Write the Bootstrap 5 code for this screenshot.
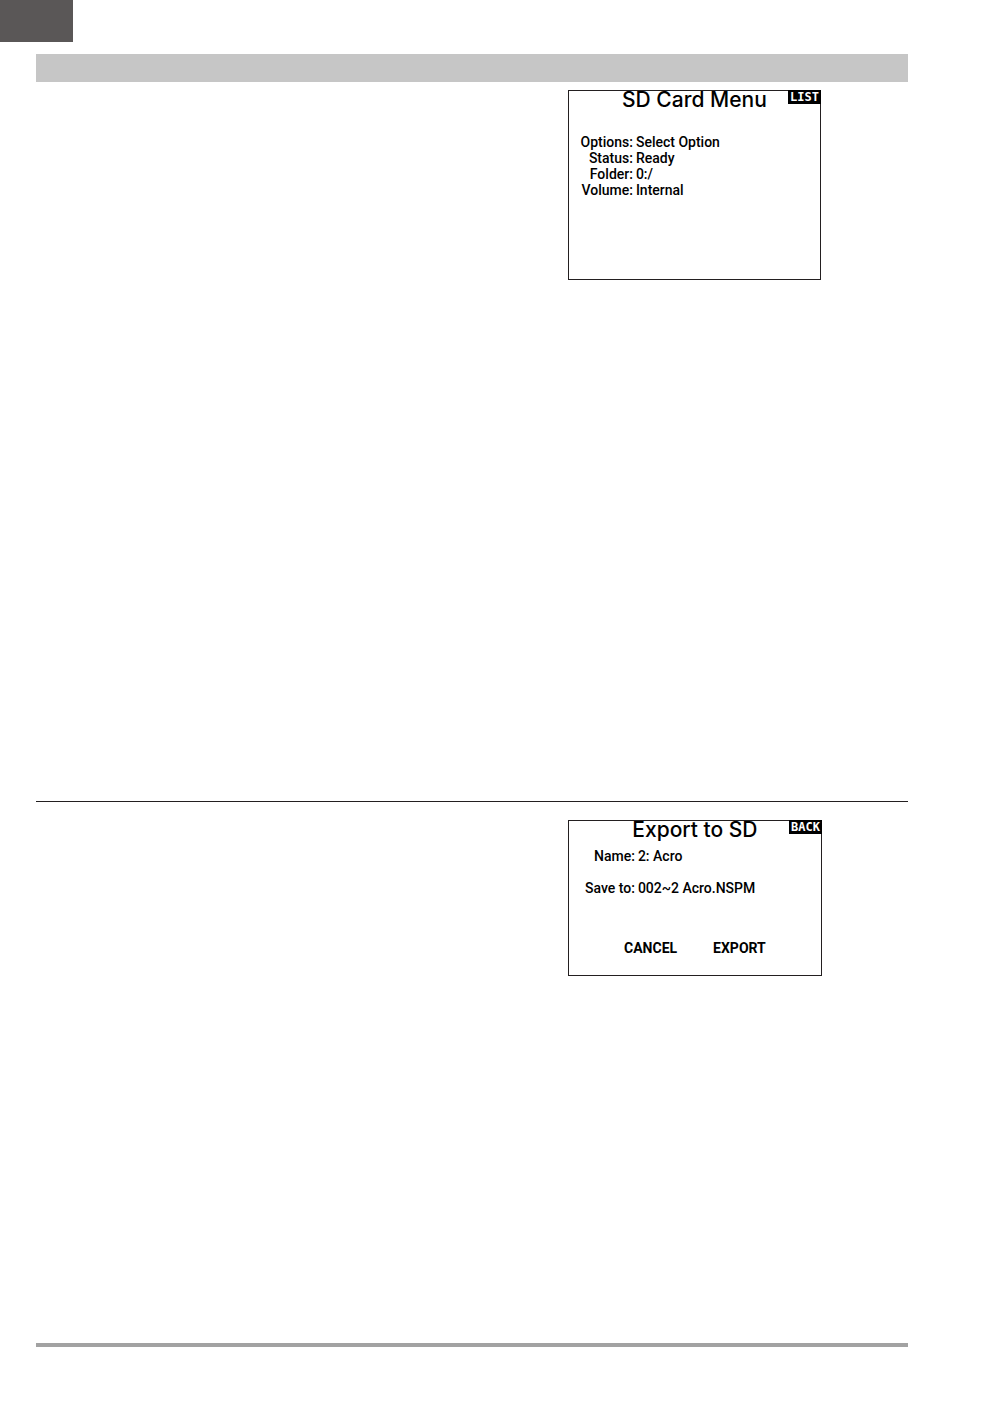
<!DOCTYPE html>
<html lang="en">
<head>
<meta charset="utf-8">
<meta name="viewport" content="width=device-width, initial-scale=1">
<title>SD Card Menu</title>
<link href="https://cdn.jsdelivr.net/npm/bootstrap@5.3.0/dist/css/bootstrap.min.css" rel="stylesheet">
<style>
body { background: #fff; color: #000; font-family: Roboto, "Liberation Sans", sans-serif; }
.page-tab { width: 73px; height: 42px; background: #5a5757; }
.sheet { margin: 12px 90px 70px 36px; }
.title-bar { height: 28px; background: #c6c6c6; }
.section { display: grid; grid-template-columns: 61fr 39fr; align-items: start; flex-basis: 0; }
.section-menu { flex-grow: 711; padding-top: 8px; }
.section-export { flex-grow: 523; padding-top: 18px; border-top: 1px solid #231f20; }
.page-end { height: 4px; background: #a2a2a2; }
.lcd { grid-column: 2; width: 253px; border: 1px solid #231f20; }
.lcd-menu { min-height: 190px; }
.lcd-export { width: 254px; min-height: 156px; }
.lcd-title { font-family: Inter, Roboto, sans-serif; font-size: 21px; line-height: 18px; font-weight: 500; text-align: center; }
.lcd-tag { top: -1px; right: -1px; width: 33px; height: 14px; font: bold 12px/14px "DejaVu Sans Mono", monospace; background: #000; color: #fff; }
.fields { display: grid; font-size: 14px; line-height: 16px; font-weight: 500; column-gap: 3px; }
.fields dt, .fields dd { margin: 0; font-weight: 500; }
.fields dt { text-align: right; }
.fields-menu { grid-template-columns: 64px 1fr; margin-top: 25px; }
.fields-export { grid-template-columns: 66px 1fr; margin-top: 9px; row-gap: 16px; }
.actions { gap: 36px; margin-top: 44px; }
.lcd-btn { font-size: 14px; line-height: 16px; font-weight: 700; color: #000; }
</style>
<script src="https://cdn.jsdelivr.net/npm/bootstrap@5.3.0/dist/js/bootstrap.bundle.min.js" defer></script>
</head>
<body>
<div class="d-flex flex-column min-vh-100">
  <div class="page-tab"></div>
  <main class="sheet d-flex flex-column flex-grow-1">
    <div class="title-bar"></div>
    <section class="section section-menu">
      <div class="lcd lcd-menu position-relative">
        <h1 class="lcd-title m-0">SD Card Menu</h1>
        <button type="button" class="lcd-tag position-absolute border-0 p-0">LIST</button>
        <dl class="fields fields-menu mb-0">
          <dt>Options:</dt><dd>Select Option</dd>
          <dt>Status:</dt><dd>Ready</dd>
          <dt>Folder:</dt><dd>0:/</dd>
          <dt>Volume:</dt><dd>Internal</dd>
        </dl>
      </div>
    </section>
    <section class="section section-export">
      <div class="lcd lcd-export position-relative">
        <h2 class="lcd-title m-0">Export to SD</h2>
        <button type="button" class="lcd-tag position-absolute border-0 p-0">BACK</button>
        <dl class="fields fields-export mb-0">
          <dt>Name:</dt><dd>2: Acro</dd>
          <dt>Save to:</dt><dd>002~2 Acro.NSPM</dd>
        </dl>
        <div class="actions d-flex justify-content-center">
          <button type="button" class="lcd-btn bg-transparent border-0 p-0">CANCEL</button>
          <button type="button" class="lcd-btn bg-transparent border-0 p-0">EXPORT</button>
        </div>
      </div>
    </section>
    <div class="page-end"></div>
  </main>
</div>
</body>
</html>
